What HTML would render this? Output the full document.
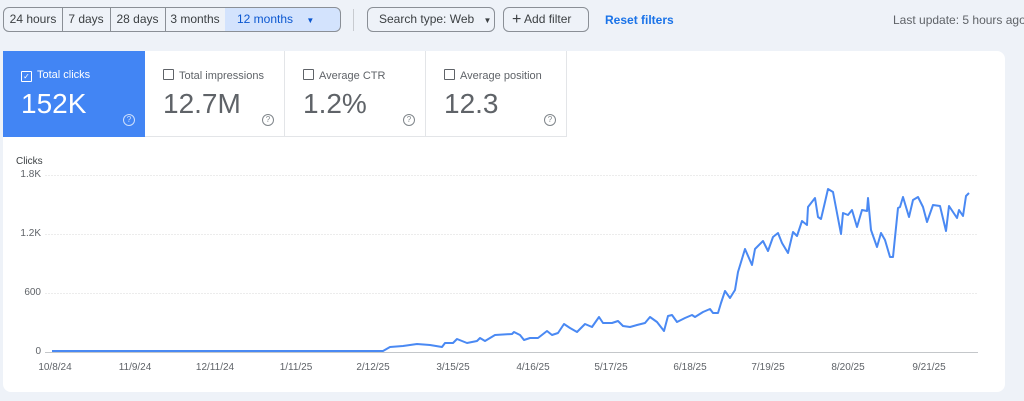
<!DOCTYPE html><html><head><style>
body{margin:0;width:1024px;height:401px;background:#eef2f8;font-family:"Liberation Sans",sans-serif;position:relative;overflow:hidden}
.a{position:absolute;white-space:nowrap}
.seg{position:absolute;top:7px;height:25px;border:1px solid #8a8f96;box-sizing:border-box;font-size:12px;color:#3c4043;line-height:23px;text-align:center;white-space:nowrap}
.tile{position:absolute;top:51px;height:86px;box-sizing:border-box;border-right:1px solid #e3e5e8;border-bottom:1px solid #e3e5e8}
.tile .l{position:absolute;left:18px;top:18px;font-size:11px;color:#5f6368;white-space:nowrap}
.tile .cb{display:inline-block;width:9px;height:9px;border:1px solid #5f6368;vertical-align:-1px;margin-right:5px;border-radius:1px}
.tile .v{position:absolute;left:18px;top:37px;font-size:28px;color:#5f6368}
.tile .q{position:absolute;right:10px;top:63px;width:10px;height:10px;border:1px solid #80868b;border-radius:50%;font-size:8px;line-height:10px;text-align:center;color:#80868b}
.yl{position:absolute;font-size:10px;color:#5f6368;text-align:right}
.xl{position:absolute;top:362px;font-size:10px;color:#5f6368;transform:translateX(-50%);white-space:nowrap}
</style></head><body>
<div class="seg" style="left:3px;width:60px;border-radius:6px 0 0 6px">24 hours</div>
<div class="seg" style="left:62px;width:49px;border-left:none">7 days</div>
<div class="seg" style="left:110px;width:56px;border-left:none">28 days</div>
<div class="seg" style="left:165px;width:61px;border-left:none">3 months</div>
<div class="seg" style="left:225px;width:116px;border-left:none;border-radius:0 6px 6px 0;background:#d3e3fd;color:#0b57d0;text-align:left;padding-left:12px">12 months <span style="font-size:8px;margin-left:10px">▼</span></div>
<div class="a" style="left:353px;top:9px;width:1px;height:22px;background:#c8cbd0"></div>
<div class="seg" style="left:367px;width:128px;border-radius:6px;text-align:left;padding-left:11px">Search type: Web <span style="font-size:8px;margin-left:6px">▼</span></div>
<div class="seg" style="left:503px;width:86px;border-radius:6px;text-align:left;padding-left:8px"><span style="font-size:16px;vertical-align:-1px">+</span> Add filter</div>
<div class="a" style="left:605px;top:13px;font-size:12px;color:#1a73e8;font-weight:bold">Reset filters</div>
<div class="a" style="left:893px;top:13px;font-size:12px;color:#5f6368">Last update: 5 hours ago</div>
<div class="a" style="left:3px;top:51px;width:1002px;height:341px;background:#fff;border-radius:0 8px 8px 8px"></div>
<div class="tile" style="left:3px;width:142px;background:#4285f4;border:none"><div class="l" style="color:#fff"><span class="cb" style="border-color:#fff;font-size:8px;line-height:9px;text-align:center">✓</span>Total clicks</div><div class="v" style="color:#fff">152K</div><div class="q" style="border-color:#cfe0fc;color:#cfe0fc">?</div></div>
<div class="tile" style="left:145px;width:140px"><div class="l"><span class="cb"></span>Total impressions</div><div class="v">12.7M</div><div class="q">?</div></div>
<div class="tile" style="left:285px;width:141px"><div class="l"><span class="cb"></span>Average CTR</div><div class="v">1.2%</div><div class="q">?</div></div>
<div class="tile" style="left:426px;width:141px"><div class="l"><span class="cb"></span>Average position</div><div class="v">12.3</div><div class="q">?</div></div>
<div class="a" style="left:16px;top:156px;font-size:10px;color:#3c4043">Clicks</div>
<div class="yl" style="top:169px;left:0;width:41px">1.8K</div>
<div class="yl" style="top:228px;left:0;width:41px">1.2K</div>
<div class="yl" style="top:287px;left:0;width:41px">600</div>
<div class="yl" style="top:346px;left:0;width:41px">0</div>
<div class="xl" style="left:55px">10/8/24</div><div class="xl" style="left:135px">11/9/24</div><div class="xl" style="left:215px">12/11/24</div><div class="xl" style="left:296px">1/11/25</div><div class="xl" style="left:373px">2/12/25</div><div class="xl" style="left:453px">3/15/25</div><div class="xl" style="left:533px">4/16/25</div><div class="xl" style="left:611px">5/17/25</div><div class="xl" style="left:690px">6/18/25</div><div class="xl" style="left:768px">7/19/25</div><div class="xl" style="left:848px">8/20/25</div><div class="xl" style="left:929px">9/21/25</div>
<svg class="a" style="left:0;top:0" width="1024" height="401">
<g stroke="#ececec" stroke-width="1" stroke-dasharray="2,1"><line x1="45" y1="175.5" x2="978" y2="175.5"/><line x1="45" y1="234.5" x2="978" y2="234.5"/><line x1="45" y1="293.5" x2="978" y2="293.5"/></g>
<line x1="45" y1="352.5" x2="978" y2="352.5" stroke="#c4c7ca"/>
<polyline fill="none" stroke="#4a89f3" stroke-width="2" stroke-linejoin="round" points="52,351 383,351 390,347 403,346 417,344 430,345 442,347 445,343 453,343 457,339 467,343 477,341 480,338 485,341 495,335 512,334 514,332 520,335 524,340 530,338 538,338 547,331 552,335 558,333 564,324 570,328 577,332 585,324 592,327 599,317 603,323 612,323 618,321 623,326 630,327 637,325 645,323 650,317 657,322 664,331 668,316 672,315 677,322 685,318 692,315 695,317 703,312 710,309 713,313 718,313 721,303 725,291 730,298 735,290 738,272 745,249 752,265 755,249 763,241 768,251 773,237 778,233 782,243 788,253 793,232 797,236 802,221 807,225 808,207 815,198 818,217 821,219 825,202 828,189 833,192 841,234 843,213 848,215 852,210 857,227 862,210 867,211 868,198 871,230 877,247 881,233 885,240 890,257 893,257 898,208 900,207 903,197 909,217 913,200 918,197 923,207 927,222 933,205 940,206 946,231 949,206 953,212 957,218 959,210 963,216 966,196 969,193"/>
</svg>
</body></html>
